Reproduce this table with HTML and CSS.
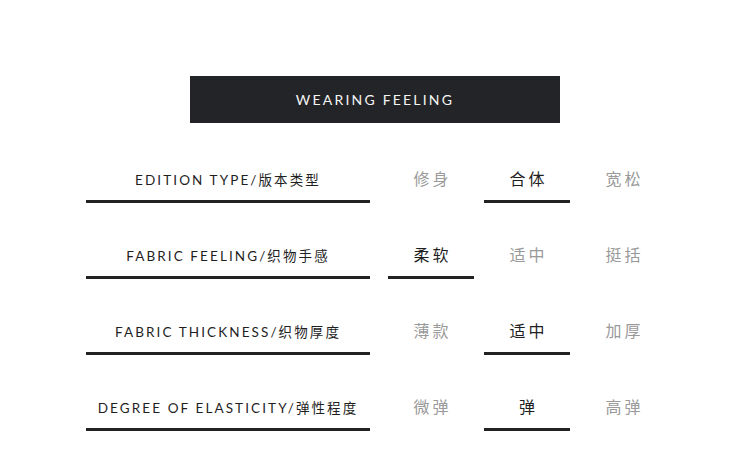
FILE: index.html
```html
<!DOCTYPE html>
<html>
<head>
<meta charset="utf-8">
<link rel="stylesheet" href="styles.css">
</head>
<body>
<div class="page">
  <div class="title">WEARING FEELING</div>
  <div class="row">
    <div class="label">EDITION TYPE/版本类型</div>
    <div class="opt">修身</div>
    <div class="opt on">合体</div>
    <div class="opt">宽松</div>
  </div>
  <div class="row">
    <div class="label">FABRIC FEELING/织物手感</div>
    <div class="opt on">柔软</div>
    <div class="opt">适中</div>
    <div class="opt">挺括</div>
  </div>
  <div class="row">
    <div class="label">FABRIC THICKNESS/织物厚度</div>
    <div class="opt">薄款</div>
    <div class="opt on">适中</div>
    <div class="opt">加厚</div>
  </div>
  <div class="row">
    <div class="label">DEGREE OF ELASTICITY/弹性程度</div>
    <div class="opt">微弹</div>
    <div class="opt on">弹</div>
    <div class="opt">高弹</div>
  </div>
</div>
</body>
</html>
```
FILE: styles.css
```css
html, body {
  margin: 0;
  padding: 0;
  background: #ffffff;
}
.page {
  width: 750px;
  height: 463px;
  padding-top: 76px;
  box-sizing: border-box;
  font-family: "Lato", "Noto Sans CJK SC", sans-serif;
}
.title {
  width: 370px;
  height: 47px;
  margin-left: 190px;
  background: #232427;
  color: #f4f4f4;
  font-size: 14px;
  letter-spacing: 2.2px;
  display: flex;
  align-items: center;
  justify-content: center;
}
.row {
  display: flex;
  align-items: flex-end;
  gap: 10px;
  margin-left: 86px;
  margin-top: 47px;
}
.row + .row {
  margin-top: 43px;
}
.label {
  width: 284px;
  margin-right: 8px;
  font-size: 13.5px;
  line-height: 20px;
  letter-spacing: 2.1px;
  color: #1f1f1f;
  text-align: center;
  padding-bottom: 10px;
  border-bottom: 3px solid #222222;
}
.opt {
  width: 86px;
  font-family: "Noto Sans CJK SC", sans-serif;
  font-size: 16px;
  line-height: 16px;
  letter-spacing: 3px;
  text-indent: 3px;
  color: #9a9a9a;
  text-align: center;
  padding-bottom: 14px;
  border-bottom: 3px solid transparent;
}
.opt.on {
  color: #1f1f1f;
  border-bottom-color: #222222;
}
```
